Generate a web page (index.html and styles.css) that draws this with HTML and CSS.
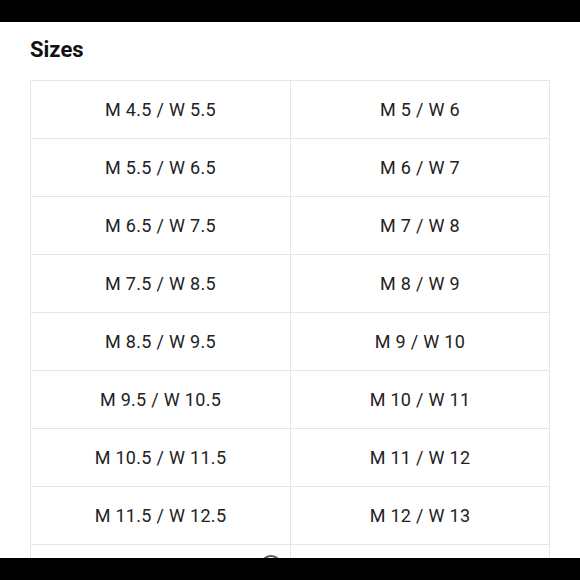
FILE: index.html
```html
<!DOCTYPE html>
<html>
<head>
<meta charset="utf-8">
<link rel="stylesheet" href="styles.css">
</head>
<body>
<div class="bar"></div>
<main class="content">
  <h2 class="title">Sizes</h2>
  <div class="grid">
    <div class="cell">M 4.5 / W 5.5</div><div class="cell">M 5 / W 6</div>
    <div class="cell">M 5.5 / W 6.5</div><div class="cell">M 6 / W 7</div>
    <div class="cell">M 6.5 / W 7.5</div><div class="cell">M 7 / W 8</div>
    <div class="cell">M 7.5 / W 8.5</div><div class="cell">M 8 / W 9</div>
    <div class="cell">M 8.5 / W 9.5</div><div class="cell">M 9 / W 10</div>
    <div class="cell">M 9.5 / W 10.5</div><div class="cell">M 10 / W 11</div>
    <div class="cell">M 10.5 / W 11.5</div><div class="cell">M 11 / W 12</div>
    <div class="cell">M 11.5 / W 12.5</div><div class="cell">M 12 / W 13</div>
    <div class="cell"></div><div class="cell"></div>
  </div>
  <svg class="mark" width="26" height="26" viewBox="0 0 26 26"><circle cx="13" cy="13" r="10" fill="none" stroke="#555" stroke-width="2"/><circle cx="13" cy="13" r="4" fill="none" stroke="#555" stroke-width="2"/></svg>
</main>
<div class="bar"></div>
</body>
</html>
```
FILE: styles.css
```css
html, body { margin: 0; padding: 0; background: #fff; }
body { width: 580px; height: 580px; overflow: hidden; display: flex; flex-direction: column; }
.bar { height: 22px; background: #000; flex: none; }
.content { position: relative; height: 536px; overflow: hidden; padding-left: 30px; }
.title { margin: 0; padding-top: 16px; height: 58px; box-sizing: border-box; font-family: "Roboto", "Liberation Sans", sans-serif; font-weight: 700; font-size: 22px; line-height: 24px; color: #111; }
.grid { display: grid; grid-template-columns: 260px 259px; grid-auto-rows: 58px; border-top: 1px solid #e6e6e6; border-left: 1px solid #e6e6e6; width: 520px; box-sizing: border-box; }
.cell { box-sizing: border-box; border-right: 1px solid #e6e6e6; border-bottom: 1px solid #e6e6e6; display: flex; align-items: center; justify-content: center; font-family: "Roboto", "Liberation Sans", sans-serif; font-size: 18px; color: #222; letter-spacing: 0.3px; }
.mark { position: absolute; left: 258px; top: 531px; }
```
